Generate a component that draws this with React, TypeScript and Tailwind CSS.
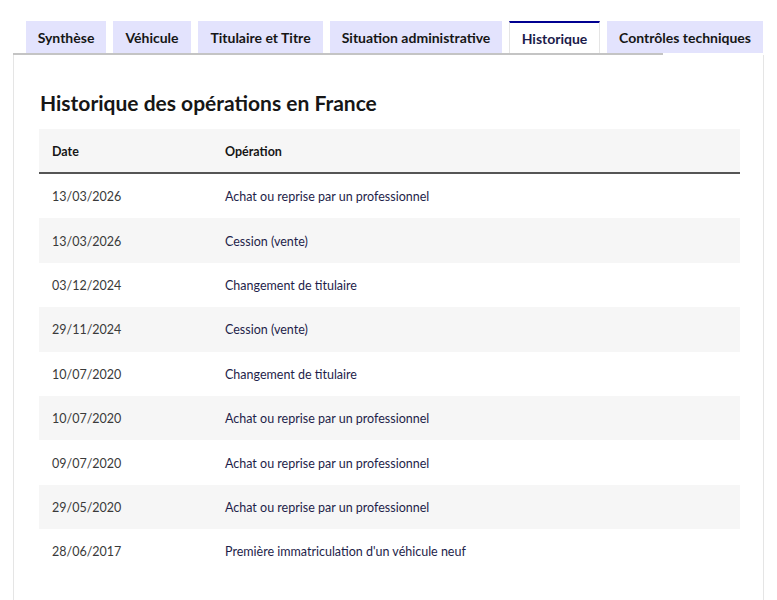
import React from 'react';

const onglets = [
  { label: 'Synthèse', largeur: 'w-[80px]', actif: false },
  { label: 'Véhicule', largeur: 'w-[78px]', actif: false },
  { label: 'Titulaire et Titre', largeur: 'w-[125px]', actif: false },
  { label: 'Situation administrative', largeur: 'w-[172px]', actif: false },
  { label: 'Historique', largeur: 'w-[91px]', actif: true },
  { label: 'Contrôles techniques', largeur: 'w-[156px]', actif: false },
];

const operations = [
  { date: '13/03/2026', libelle: 'Achat ou reprise par un professionnel' },
  { date: '13/03/2026', libelle: 'Cession (vente)' },
  { date: '03/12/2024', libelle: 'Changement de titulaire' },
  { date: '29/11/2024', libelle: 'Cession (vente)' },
  { date: '10/07/2020', libelle: 'Changement de titulaire' },
  { date: '10/07/2020', libelle: 'Achat ou reprise par un professionnel' },
  { date: '09/07/2020', libelle: 'Achat ou reprise par un professionnel' },
  { date: '29/05/2020', libelle: 'Achat ou reprise par un professionnel' },
  { date: '28/06/2017', libelle: "Première immatriculation d'un véhicule neuf" },
];

export default function App() {
  return (
    <div className="w-[777px] h-[600px] overflow-hidden bg-white font-['Lato',sans-serif] text-[#161616]">
      <div className="flex gap-[7px] pt-[21px] pl-[26px]">
        {onglets.map((o) => (
          <div
            key={o.label}
            className={
              o.actif
                ? `${o.largeur} shrink-0 h-[32px] flex items-center justify-center whitespace-nowrap bg-white border-t-2 border-x border-t-[#000091] border-x-[#e5e5e5] text-[14px] font-bold text-[#1b1b4a]`
                : `${o.largeur} shrink-0 h-[32px] flex items-center justify-center whitespace-nowrap bg-[#e3e3fd] text-[14px] font-bold text-[#161616]`
            }
          >
            {o.label}
          </div>
        ))}
      </div>
      <div className="ml-[13px] w-[650px] h-[2px] bg-[#c4c4c4]" />
      <div className="ml-[13px] w-[751px] h-[600px] border-x border-[#e5e5e5] px-[25px] pt-[34px]">
        <h2 className="text-[21px] leading-[28px] font-bold text-[#161616] mb-[12px] ml-[1px]">
          Historique des opérations en France
        </h2>
        <div className="w-[701px] text-[12.5px]">
          <div className="flex h-[45px] pt-[3px] items-center bg-[#f6f6f6] border-b-2 border-[#555] font-bold text-[#161616]">
            <div className="w-[186px] pl-[13px]">Date</div>
            <div>Opération</div>
          </div>
          {operations.map((op, i) => (
            <div
              key={i}
              className={`flex h-[44.4px] pt-[3px] items-center ${i % 2 === 1 ? 'bg-[#f6f6f6]' : 'bg-white'}`}
            >
              <div className="w-[186px] pl-[13px] text-[#3a3a3a]">{op.date}</div>
              <div className="text-[#1e1e4a]">{op.libelle}</div>
            </div>
          ))}
        </div>
      </div>
    </div>
  );
}
